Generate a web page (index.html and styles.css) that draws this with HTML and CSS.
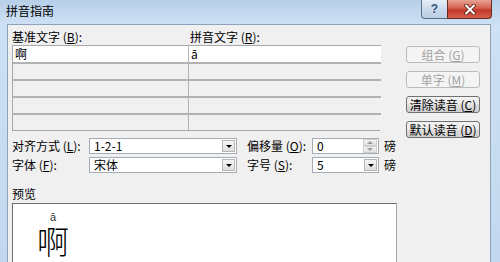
FILE: index.html
```html
<!DOCTYPE html>
<html>
<head>
<meta charset="utf-8">
<link rel="stylesheet" href="styles.css">
</head>
<body>
<div class="window">
  <div class="titlebar">
    <span class="title">拼音指南</span>
    <div class="caption">
      <div class="cbtn help">?</div>
      <div class="cbtn close">
        <svg width="14" height="11" viewBox="0 0 14 11">
          <path d="M3 1.5 L11 9.5 M11 1.5 L3 9.5" stroke="#5a1a10" stroke-width="3.6" stroke-linecap="round"/>
          <path d="M3 1.5 L11 9.5 M11 1.5 L3 9.5" stroke="#ffffff" stroke-width="2" stroke-linecap="round"/>
        </svg>
      </div>
    </div>
  </div>
  <div class="client">
    <div class="top">
      <div class="grid-area">
        <div class="heads">
          <span class="head1">基准文字 (<u>B</u>):</span>
          <span>拼音文字 (<u>R</u>):</span>
        </div>
        <div class="table">
          <div class="cell first left">啊</div><div class="cell first">ā</div>
          <div class="cell left"></div><div class="cell"></div>
          <div class="cell left"></div><div class="cell"></div>
          <div class="cell left"></div><div class="cell"></div>
          <div class="cell left"></div><div class="cell"></div>
        </div>
      </div>
      <div class="btns">
        <div class="btn disabled">组合 (<u>G</u>)</div>
        <div class="btn disabled">单字 (<u>M</u>)</div>
        <div class="btn">清除读音 (<u>C</u>)</div>
        <div class="btn">默认读音 (<u>D</u>)</div>
      </div>
    </div>
    <div class="opts">
      <span class="lbl">对齐方式 (<u>L</u>):</span>
      <div class="combo"><span class="val">1-2-1</span><span class="arrow"><i class="tri"></i></span></div>
      <span class="lbl lbl2">偏移量 (<u>O</u>):</span>
      <div class="combo"><span class="val">0</span><span class="spin"><span class="up"><i class="tri-up"></i></span><span class="down"><i class="tri-down"></i></span></span></div>
      <span class="unit">磅</span>

      <span class="lbl">字体 (<u>F</u>):</span>
      <div class="combo"><span class="val">宋体</span><span class="arrow"><i class="tri"></i></span></div>
      <span class="lbl lbl2">字号 (<u>S</u>):</span>
      <div class="combo"><span class="val">5</span><span class="arrow"><i class="tri"></i></span></div>
      <span class="unit">磅</span>
    </div>
    <div class="preview-label">预览</div>
    <div class="preview">
      <div class="ruby">
        <span class="rt">ā</span>
        <span class="rb">啊</span>
      </div>
    </div>
  </div>
</div>
</body>
</html>
```

FILE: styles.css
```css
html, body {
  margin: 0;
  padding: 0;
}
body {
  width: 500px;
  height: 262px;
  overflow: hidden;
  font-family: "Noto Sans CJK SC", "Liberation Sans", sans-serif;
  font-size: 12px;
  color: #000;
  background: #c6daf0;
}
.window {
  height: 262px;
  display: flex;
  flex-direction: column;
  background: linear-gradient(to bottom, #b7cfe9 0px, #cde0f4 24px, #c3d8ef 100%);
}
.titlebar {
  height: 24px;
  flex-shrink: 0;
  display: flex;
  align-items: flex-start;
}
.title {
  padding: 3px 0 0 6px;
  line-height: 16px;
  font-size: 12px;
}
.caption {
  margin-left: auto;
  margin-right: 8px;
  display: flex;
}
.cbtn {
  height: 19px;
  box-sizing: border-box;
  border: 1px solid #5a6f88;
  border-top: none;
  display: flex;
  align-items: center;
  justify-content: center;
}
.help {
  width: 26px;
  border-right: none;
  border-radius: 0 0 0 4px;
  background: linear-gradient(to bottom, #e6eef8, #cbdbec 50%, #b9cde4);
  color: #3a5678;
  font-weight: bold;
  font-family: "Liberation Sans", sans-serif;
  font-size: 12px;
}
.close {
  width: 45px;
  border-radius: 0 0 4px 0;
  border-color: #6a2a22;
  background: linear-gradient(to bottom, #e7a294, #d4614e 45%, #c2382a 55%, #d4604a);
}
.client {
  flex: 1;
  margin: 0 9px 0 7px;
  background: #f0f0f0;
  border: 1px solid #8ea3bb;
  border-bottom: none;
  padding: 5px 0 0 4px;
}
.top {
  display: flex;
  align-items: flex-start;
}
.grid-area {
  width: 368px;
}
.heads {
  display: flex;
  height: 15px;
  line-height: 14px;
}
.head1 {
  width: 178px;
}
.table {
  display: grid;
  grid-template-columns: 176px 192px;
  border: 1px solid #a8a8a8;
  border-top: none;
}
.cell {
  height: 15px;
  border-top: 2px solid #b2b2b2;
  background: #f0f0f0;
  line-height: 15px;
  padding-left: 2px;
  font-size: 12px;
}
.cell.left {
  border-right: 1px solid #b2b2b2;
}
.cell.first {
  background: #fff;
  border-top: 1px solid #a8a8a8;
  height: 16px;
}
.btns {
  width: 74px;
  margin-left: 26px;
  margin-top: 16px;
  display: flex;
  flex-direction: column;
  gap: 8px;
}
.btn {
  height: 17px;
  box-sizing: border-box;
  border: 1px solid #707070;
  border-radius: 3px;
  background: linear-gradient(to bottom, #f2f2f2 0%, #ebebeb 48%, #dddddd 52%, #cfcfcf 100%);
  text-align: center;
  line-height: 15px;
  font-size: 12px;
}
.btn.disabled {
  color: #a3a3a3;
  border-color: #b8bcc0;
  background: #f4f4f4;
}
.opts {
  display: grid;
  grid-template-columns: 77px 148px 75px 67px auto;
  grid-auto-rows: 16px;
  row-gap: 3px;
  align-items: center;
}
.lbl {
  line-height: 16px;
}
.lbl2 {
  padding-left: 10px;
}
.combo {
  height: 16px;
  box-sizing: border-box;
  border: 1px solid #a5acb5;
  background: #fff;
  display: flex;
}
.combo .val {
  flex: 1;
  padding-left: 4px;
  line-height: 14px;
}
.arrow {
  width: 13px;
  margin: 1px;
  box-sizing: border-box;
  border: 1px solid #b5b5b5;
  background: linear-gradient(to bottom, #f6f6f6, #dedede);
  display: flex;
  align-items: center;
  justify-content: center;
}
.tri {
  width: 0;
  height: 0;
  border-left: 3px solid transparent;
  border-right: 3px solid transparent;
  border-top: 3px solid #000;
}
.spin {
  width: 14px;
  display: flex;
  flex-direction: column;
  margin: 0 1px;
}
.spin .up, .spin .down {
  flex: 1;
  display: flex;
  align-items: center;
  justify-content: center;
  background: linear-gradient(to bottom, #f3f3f3, #e2e2e2);
  border: 1px solid #cfcfcf;
}
.tri-up {
  width: 0;
  height: 0;
  border-left: 3px solid transparent;
  border-right: 3px solid transparent;
  border-bottom: 3px solid #9a9a9a;
}
.tri-down {
  width: 0;
  height: 0;
  border-left: 3px solid transparent;
  border-right: 3px solid transparent;
  border-top: 3px solid #9a9a9a;
}
.unit {
  padding-left: 5px;
  line-height: 16px;
}
.preview-label {
  margin-top: 13px;
  height: 15px;
  line-height: 15px;
  margin-bottom: 2px;
}
.preview {
  width: 385px;
  height: 70px;
  box-sizing: border-box;
  background: #fff;
  border-top: 1px solid #6d6d6d;
  border-left: 1px solid #6d6d6d;
  border-right: 1px solid #a6a6a6;
  padding: 3px 0 0 24px;
}
.ruby {
  display: inline-flex;
  flex-direction: column;
  align-items: center;
}
.rt {
  font-family: "Liberation Sans", sans-serif;
  font-size: 11px;
  line-height: 13px;
  color: #333;
}
.rb {
  margin-top: 0;
  font-size: 32px;
  line-height: 32px;
  font-weight: 300;
}
```
